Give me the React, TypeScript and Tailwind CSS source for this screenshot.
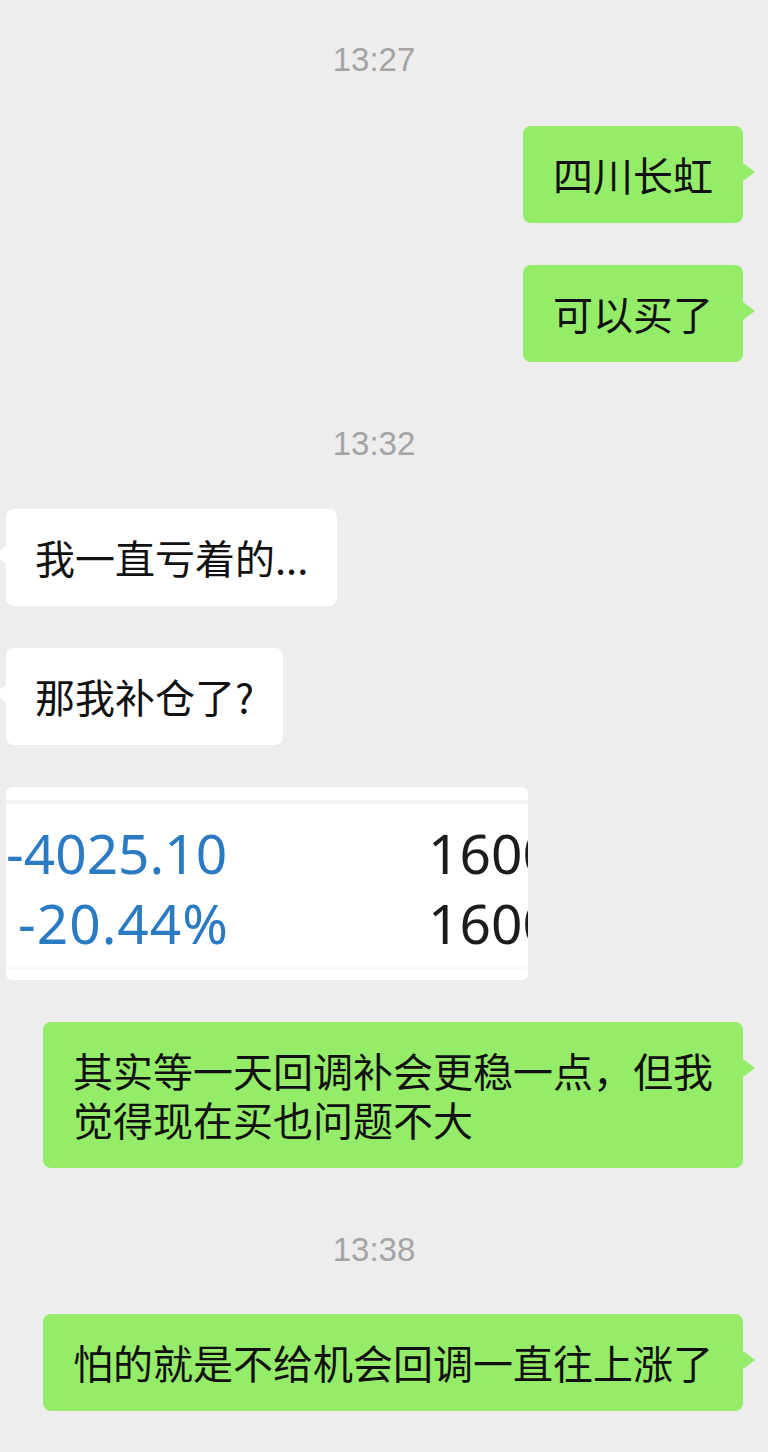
import React from 'react';

const cjk = { fontFamily: '"Noto Sans CJK SC", "Noto Sans", sans-serif' };

function Time({ t, className }: { t: string; className?: string }) {
    return (
        <div
            className={`h-10 flex items-center justify-center pr-[20px] text-[33px] text-[#a4a4a4] ${className || ''}`}
            style={{ fontFamily: '"Liberation Sans", Arial, sans-serif' }}
        >
            {t}
        </div>
    );
}

function Mine({ text }: { text: string }) {
    return (
        <div className="flex justify-end pr-[25px]">
            <div
                className="relative max-w-[700px] rounded-lg bg-[#95ec69] px-[30px] py-[24px] text-[40px] leading-[49px] text-[#111]"
                style={cjk}
            >
                {text}
                <span className="absolute -right-[12px] top-[37px] h-0 w-0 border-y-[9px] border-l-[12px] border-y-transparent border-l-[#95ec69]" />
            </div>
        </div>
    );
}

function Theirs({ text }: { text: string }) {
    return (
        <div className="flex justify-start pl-[6px]">
            <div
                className="relative rounded-lg bg-white px-[29px] py-[24px] text-[40px] leading-[49px] text-[#111]"
                style={cjk}
            >
                {text}
                <span className="absolute -left-[12px] top-[37px] h-0 w-0 border-y-[9px] border-r-[12px] border-y-transparent border-r-white" />
            </div>
        </div>
    );
}

function Screenshot() {
    const num = { fontFamily: '"Noto Sans", "Open Sans", sans-serif' };
    return (
        <div className="flex justify-start pl-[6px]">
            <div className="w-[522px] h-[193px] overflow-hidden rounded-md bg-white flex flex-col">
                <div className="h-[13px]" />
                <div className="h-[4px] bg-[#f4f4f4]" />
                <div className="h-[14px]" />
                <div className="flex text-[55px] leading-[70px] whitespace-nowrap" style={num}>
                    <div className="w-[220px] shrink-0 text-right text-[#2a7bc3]">-4025.10</div>
                    <div className="ml-[202px] text-[#1c1c1c]">16000</div>
                </div>
                <div className="flex text-[55px] leading-[70px] whitespace-nowrap" style={num}>
                    <div className="w-[223px] shrink-0 text-right text-[#2a7bc3] tracking-[1px]">-20.44%</div>
                    <div className="ml-[199px] text-[#1c1c1c]">16000</div>
                </div>
                <div className="h-[8px]" />
                <div className="h-[3px] bg-[#f8f8f8]" />
            </div>
        </div>
    );
}

export default function App() {
    return (
        <div className="w-[768px] h-[1452px] overflow-hidden bg-[#ededed] flex flex-col pt-[40px]">
            <Time t="13:27" className="mb-[46px]" />
            <div className="flex flex-col gap-[42px]">
                <Mine text="四川长虹" />
                <Mine text="可以买了" />
            </div>
            <Time t="13:32" className="mt-[62px] mb-[45px]" />
            <div className="flex flex-col gap-[42px]">
                <Theirs text="我一直亏着的..." />
                <Theirs text="那我补仓了?" />
                <Screenshot />
                <Mine text="其实等一天回调补会更稳一点，但我觉得现在买也问题不大" />
            </div>
            <Time t="13:38" className="mt-[62px] mb-[44px]" />
            <Mine text="怕的就是不给机会回调一直往上涨了" />
        </div>
    );
}
